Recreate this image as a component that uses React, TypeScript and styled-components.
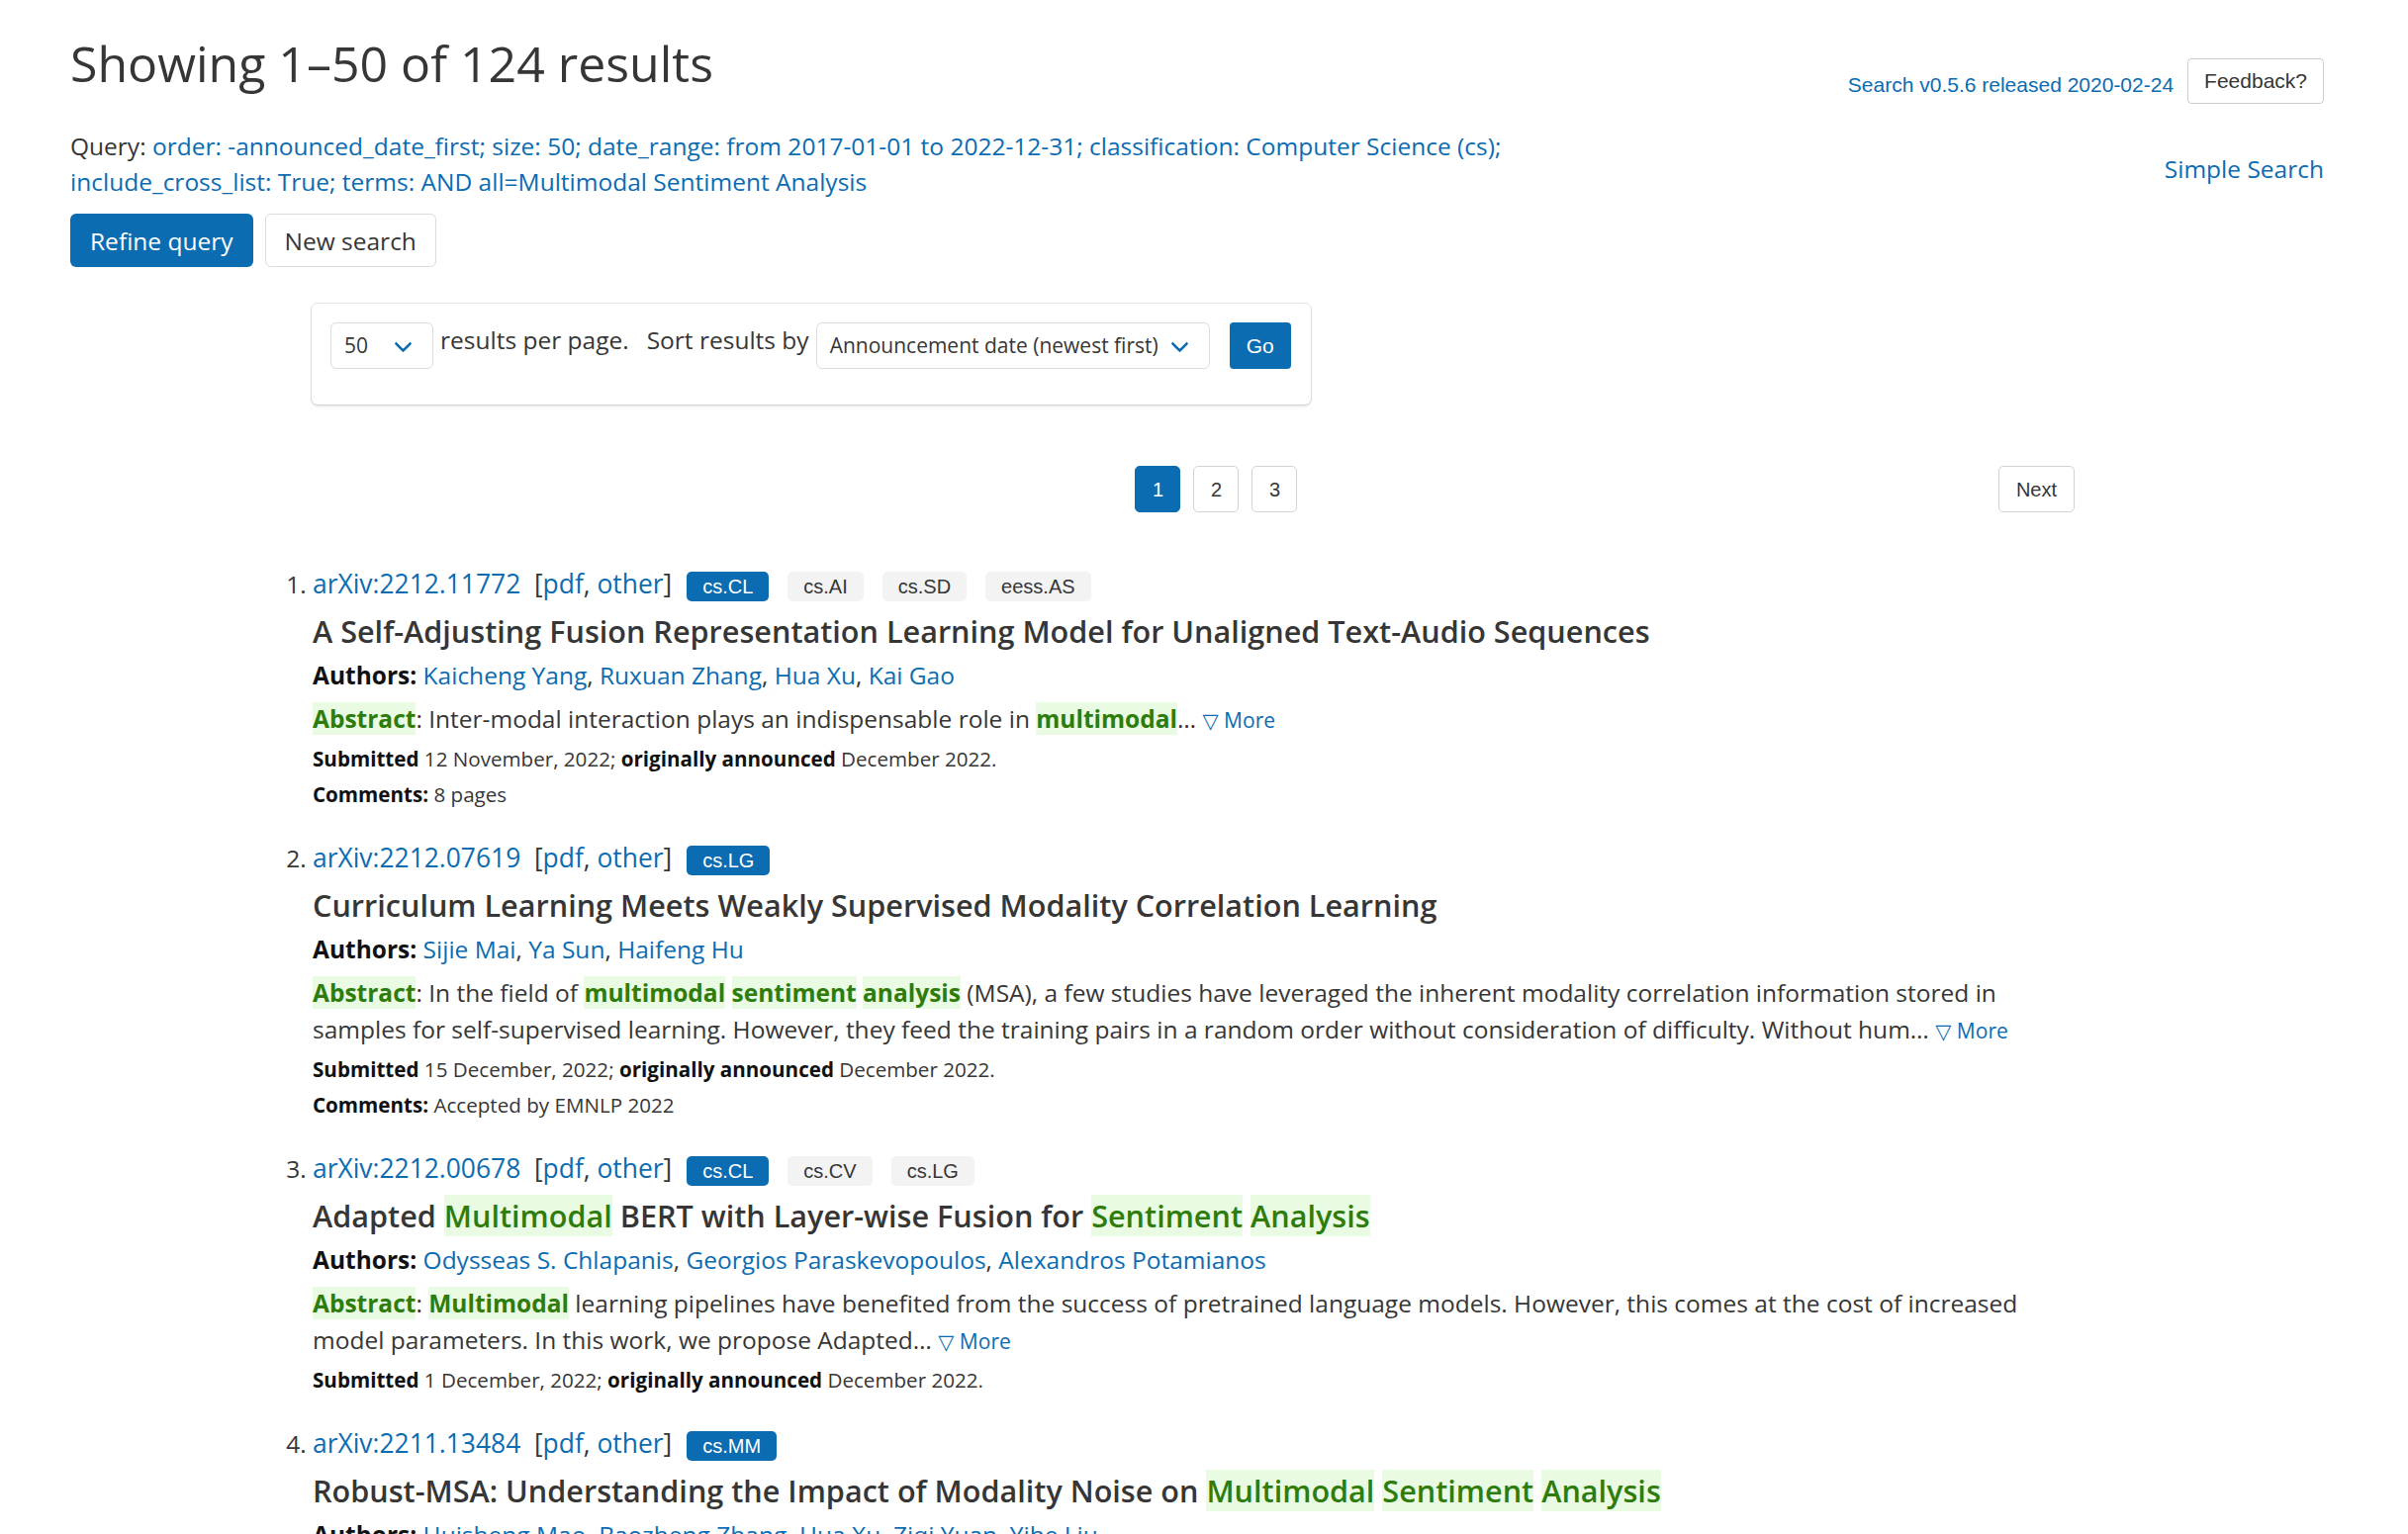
import React from "react";
import styled, { createGlobalStyle } from "styled-components";

const BLUE = "#0b6cb2";
const TEXT = "#363636";
const STRONG = "#111111";
const HIT_FG = "#2e7d0c";
const HIT_BG = "#eafbe3";
const SANS = `"Open Sans", "Noto Sans", "DejaVu Sans", sans-serif`;
const ARIAL = `"Liberation Sans", Arial, sans-serif`;

const Global = createGlobalStyle`
  html, body { margin: 0; padding: 0; background: #ffffff; overflow: hidden; }
  body {
    font-family: ${SANS};
    font-size: 24.5px;
    line-height: 1.5;
    color: ${TEXT};
  }
  * { box-sizing: border-box; }
  a { color: ${BLUE}; text-decoration: none; }
`;

const Page = styled.div`
  padding: 36px 85px 0 71px;
`;

const HeaderRow = styled.div`
  display: flex;
  justify-content: space-between;
  align-items: flex-start;
`;

const Heading = styled.h1`
  margin: 0;
  font-size: 50px;
  line-height: 56px;
  font-weight: 400;
  color: ${TEXT};
`;

const TopRight = styled.div`
  display: flex;
  align-items: center;
  gap: 14px;
  margin-top: 23px;
`;

const VersionLink = styled.a`
  font-family: ${ARIAL};
  font-size: 21px;
  margin-top: 7px;
`;

const FeedbackButton = styled.button`
  font-family: ${ARIAL};
  font-size: 21px;
  height: 46px;
  padding: 0 16px;
  background: #ffffff;
  color: ${TEXT};
  border: 1px solid #cdcdcd;
  border-radius: 4px;
`;

const QueryRow = styled.div`
  display: flex;
  justify-content: space-between;
  align-items: flex-start;
  margin-top: 25px;
`;

const QueryText = styled.p`
  margin: 0;
  max-width: 1550px;
  line-height: 36px;
`;

const SimpleSearch = styled.a`
  margin-top: 23px;
  line-height: 36px;
  white-space: nowrap;
`;

const ButtonRow = styled.div`
  display: flex;
  gap: 12px;
  margin-top: 14px;
`;

const ActionButton = styled.button<{ $primary?: boolean }>`
  font-family: ${SANS};
  font-size: 24.5px;
  height: 54px;
  padding: 0 19px;
  border-radius: 6px;
  border: 1px solid ${(p) => (p.$primary ? "transparent" : "#dbdbdb")};
  background: ${(p) => (p.$primary ? BLUE : "#ffffff")};
  color: ${(p) => (p.$primary ? "#ffffff" : TEXT)};
`;

const Main = styled.div`
  margin-left: 244px;
  width: 1782px;
`;

const FilterBox = styled.div`
  width: fit-content;
  display: flex;
  align-items: flex-start;
  margin-top: 37px;
  padding: 19px 20px 36px 19px;
  border-radius: 6px;
  background: #ffffff;
  box-shadow: 0 2px 3px rgba(10, 10, 10, 0.1), 0 0 0 1px rgba(10, 10, 10, 0.1);
`;

const SelectBox = styled.div<{ $w: number; $ml?: number }>`
  position: relative;
  width: ${(p) => p.$w}px;
  height: 47px;
  margin-left: ${(p) => p.$ml ?? 0}px;
  display: flex;
  align-items: center;
  padding-left: 13px;
  border: 1px solid #dbdbdb;
  border-radius: 6px;
  font-size: 21px;
  color: ${TEXT};
  white-space: nowrap;
`;

const Chevron = styled.span`
  position: absolute;
  right: 23px;
  top: 50%;
  margin-top: -9px;
  width: 13px;
  height: 13px;
  border: 3.5px solid ${BLUE};
  border-top: 0;
  border-right: 0;
  border-radius: 2px;
  transform: rotate(-45deg);
`;

const FilterLabel = styled.span<{ $ml: number }>`
  margin-left: ${(p) => p.$ml}px;
  line-height: 36px;
  white-space: nowrap;
`;

const GoButton = styled.button`
  margin-left: 20px;
  width: 62px;
  height: 47px;
  border: 0;
  border-radius: 4px;
  background: ${BLUE};
  color: #ffffff;
  font-family: ${ARIAL};
  font-size: 21px;
`;

const Pagination = styled.nav`
  display: flex;
  align-items: center;
  margin-top: 62px;
`;

const PageGhost = styled.span`
  width: 124px;
  visibility: hidden;
`;

const PageList = styled.div`
  flex: 1;
  display: flex;
  justify-content: center;
  gap: 13px;
`;

const PageLink = styled.a<{ $current?: boolean }>`
  min-width: 46px;
  height: 47px;
  padding: 0 17px;
  display: flex;
  align-items: center;
  justify-content: center;
  border: 1px solid ${(p) => (p.$current ? BLUE : "#d3d3d3")};
  border-radius: 5px;
  background: ${(p) => (p.$current ? BLUE : "#ffffff")};
  color: ${(p) => (p.$current ? "#ffffff" : TEXT)};
  font-family: ${ARIAL};
  font-size: 20px;
`;

const NumLink = styled(PageLink)`
  padding: 0;
`;

const ResultList = styled.ol`
  margin: 54px 0 0 0;
  padding: 0 0 0 1px;
  list-style: decimal outside;
`;

const ResultItem = styled.li`
  margin-bottom: 31.5px;
  font-size: 24.5px;
  color: ${TEXT};
`;

const ListTitle = styled.p`
  margin: 0;
  font-size: 26.4px;
  line-height: 36px;
  white-space: nowrap;
`;

const Tag = styled.span<{ $primary?: boolean; $first?: boolean }>`
  display: inline-block;
  height: 30px;
  line-height: 30px;
  padding: 0 16px;
  margin-left: ${(p) => (p.$first ? 15 : 19)}px;
  border-radius: 5px;
  font-family: ${ARIAL};
  font-size: 20px;
  background: ${(p) => (p.$primary ? BLUE : "#f3f3f3")};
  color: ${(p) => (p.$primary ? "#ffffff" : TEXT)};
`;

const Title = styled.p`
  margin: 12px 0 0 0;
  font-size: 30.6px;
  font-weight: 600;
  line-height: 37.5px;
  color: ${TEXT};
`;

const TitleHit = styled.span`
  background: ${HIT_BG};
  color: ${HIT_FG};
`;

const Authors = styled.p`
  margin: 6.5px 0 0 0;
  line-height: 37px;
`;

const Label = styled.span`
  font-weight: 700;
  color: ${STRONG};
`;

const Abstract = styled.p`
  margin: 6.5px 0 0 0;
  line-height: 37px;
`;

const AbstractHit = styled.span`
  background: ${HIT_BG};
  color: ${HIT_FG};
  font-weight: 700;
`;

const MoreLink = styled.a`
  font-size: 21px;
  line-height: 1;
`;

const Meta = styled.p<{ $gap: number }>`
  margin: ${(p) => p.$gap}px 0 0 0;
  font-size: 20.6px;
  line-height: 30px;
`;

type Seg = string | { h: string };

interface ResultData {
  id: string;
  tags: { label: string; primary?: boolean }[];
  title: Seg[];
  authors: string[];
  abstract?: Seg[];
  submitted?: string;
  comments?: string;
}

const results: ResultData[] = [
  {
    id: "2212.11772",
    tags: [{ label: "cs.CL", primary: true }, { label: "cs.AI" }, { label: "cs.SD" }, { label: "eess.AS" }],
    title: ["A Self-Adjusting Fusion Representation Learning Model for Unaligned Text-Audio Sequences"],
    authors: ["Kaicheng Yang", "Ruxuan Zhang", "Hua Xu", "Kai Gao"],
    abstract: ["Inter-modal interaction plays an indispensable role in ", { h: "multimodal" }, "\u2026"],
    submitted: "12 November, 2022",
    comments: "8 pages",
  },
  {
    id: "2212.07619",
    tags: [{ label: "cs.LG", primary: true }],
    title: ["Curriculum Learning Meets Weakly Supervised Modality Correlation Learning"],
    authors: ["Sijie Mai", "Ya Sun", "Haifeng Hu"],
    abstract: [
      "In the field of ",
      { h: "multimodal" },
      " ",
      { h: "sentiment" },
      " ",
      { h: "analysis" },
      " (MSA), a few studies have leveraged the inherent modality correlation information stored in samples for self-supervised learning. However, they feed the training pairs in a random order without consideration of difficulty. Without hum\u2026",
    ],
    submitted: "15 December, 2022",
    comments: "Accepted by EMNLP 2022",
  },
  {
    id: "2212.00678",
    tags: [{ label: "cs.CL", primary: true }, { label: "cs.CV" }, { label: "cs.LG" }],
    title: ["Adapted ", { h: "Multimodal" }, " BERT with Layer-wise Fusion for ", { h: "Sentiment" }, " ", { h: "Analysis" }],
    authors: ["Odysseas S. Chlapanis", "Georgios Paraskevopoulos", "Alexandros Potamianos"],
    abstract: [
      { h: "Multimodal" },
      " learning pipelines have benefited from the success of pretrained language models. However, this comes at the cost of increased model parameters. In this work, we propose Adapted\u2026",
    ],
    submitted: "1 December, 2022",
  },
  {
    id: "2211.13484",
    tags: [{ label: "cs.MM", primary: true }],
    title: [
      "Robust-MSA: Understanding the Impact of Modality Noise on ",
      { h: "Multimodal" },
      " ",
      { h: "Sentiment" },
      " ",
      { h: "Analysis" },
    ],
    authors: ["Huisheng Mao", "Baozheng Zhang", "Hua Xu", "Ziqi Yuan", "Yihe Liu"],
  },
];

const Result: React.FC<{ r: ResultData }> = ({ r }) => (
  <ResultItem>
    <ListTitle>
      <a href="#">arXiv:{r.id}</a>
      {"\u00a0\u00a0["}
      <a href="#">pdf</a>, <a href="#">other</a>]
      {r.tags.map((t, i) => (
        <Tag key={t.label} $primary={t.primary} $first={i === 0}>
          {t.label}
        </Tag>
      ))}
    </ListTitle>
    <Title>
      {r.title.map((s, i) => (typeof s === "string" ? <React.Fragment key={i}>{s}</React.Fragment> : <TitleHit key={i}>{s.h}</TitleHit>))}
    </Title>
    <Authors>
      <Label>Authors:</Label>{" "}
      {r.authors.map((a, i) => (
        <React.Fragment key={a}>
          {i > 0 && ", "}
          <a href="#">{a}</a>
        </React.Fragment>
      ))}
    </Authors>
    {r.abstract && (
      <Abstract>
        <AbstractHit>Abstract</AbstractHit>:{" "}
        {r.abstract.map((s, i) =>
          typeof s === "string" ? <React.Fragment key={i}>{s}</React.Fragment> : <AbstractHit key={i}>{s.h}</AbstractHit>
        )}{" "}
        <MoreLink href="#">{"\u25BD More"}</MoreLink>
      </Abstract>
    )}
    {r.submitted && (
      <Meta $gap={7}>
        <Label>Submitted</Label> {r.submitted}; <Label>originally announced</Label> December 2022.
      </Meta>
    )}
    {r.comments && (
      <Meta $gap={6}>
        <Label>Comments:</Label> {r.comments}
      </Meta>
    )}
  </ResultItem>
);

export default function App() {
  return (
    <>
      <Global />
      <Page>
        <HeaderRow>
          <Heading>Showing 1&ndash;50 of 124 results</Heading>
          <TopRight>
            <VersionLink href="#">Search v0.5.6 released 2020-02-24</VersionLink>
            <FeedbackButton>Feedback?</FeedbackButton>
          </TopRight>
        </HeaderRow>
        <QueryRow>
          <QueryText>
            Query:{" "}
            <a href="#">
              order: -announced_date_first; size: 50; date_range: from 2017-01-01 to 2022-12-31; classification: Computer
              Science (cs); include_cross_list: True; terms: AND all=Multimodal Sentiment Analysis
            </a>
          </QueryText>
          <SimpleSearch href="#">Simple Search</SimpleSearch>
        </QueryRow>
        <ButtonRow>
          <ActionButton $primary>Refine query</ActionButton>
          <ActionButton>New search</ActionButton>
        </ButtonRow>
        <Main>
          <FilterBox>
            <SelectBox $w={104}>
              50
              <Chevron />
            </SelectBox>
            <FilterLabel $ml={7}>results per page.</FilterLabel>
            <FilterLabel $ml={18}>Sort results by</FilterLabel>
            <SelectBox $w={398} $ml={7}>
              Announcement date (newest first)
              <Chevron />
            </SelectBox>
            <GoButton>Go</GoButton>
          </FilterBox>
          <Pagination>
            <PageGhost>Previous</PageGhost>
            <PageList>
              <NumLink $current href="#">1</NumLink>
              <NumLink href="#">2</NumLink>
              <NumLink href="#">3</NumLink>
            </PageList>
            <PageLink href="#">Next</PageLink>
          </Pagination>
          <ResultList>
            {results.map((r) => (
              <Result key={r.id} r={r} />
            ))}
          </ResultList>
        </Main>
      </Page>
    </>
  );
}
